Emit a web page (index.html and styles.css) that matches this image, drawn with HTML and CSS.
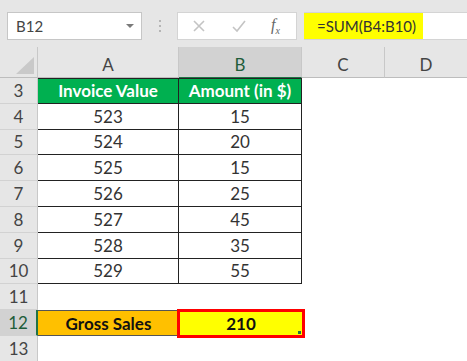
FILE: index.html
```html
<!DOCTYPE html>
<html lang="en">
<head>
  <meta charset="UTF-8">
  <title>Gross Sales - Book1</title>
  <link rel="stylesheet" href="styles.css">
</head>
<body>
  <div class="toolbar">
    <div class="namebox">
      <span>B12</span>
      <svg class="caret" width="8" height="4" viewBox="0 0 8 4"><path d="M0 0H8L4 4Z" fill="#7a7a7a"/></svg>
    </div>
    <div class="grip"><i></i><i></i><i></i></div>
    <div class="fxbox">
      <svg width="14" height="14" viewBox="0 0 14 14"><path d="M2 2L12 12M12 2L2 12" stroke="#c4c4c4" stroke-width="1.6" fill="none"/></svg>
      <svg width="16" height="14" viewBox="0 0 16 14"><path d="M2 8L6 12L14 2" stroke="#c4c4c4" stroke-width="1.6" fill="none"/></svg>
      <span class="fx"><i>f</i><sub>x</sub></span>
    </div>
    <div class="formula">
      <span class="mark">=SUM(B4:B10)</span>
    </div>
  </div>

  <div class="sheet">
    <div class="corner"><svg width="18" height="17" viewBox="0 0 18 17"><path d="M18 0V17H0Z" fill="#c9c9c9"/></svg></div>
    <div class="colhead">A</div>
    <div class="colhead active">B</div>
    <div class="colhead">C</div>
    <div class="colhead last">D</div>

    <div class="rowhead">3</div>
    <div class="cell tbl top title">Invoice Value</div>
    <div class="cell tbl top title">Amount (in $)</div>
    <div class="cell"></div><div class="cell"></div>

    <div class="rowhead">4</div>
    <div class="cell tbl">523</div><div class="cell tbl">15</div>
    <div class="cell"></div><div class="cell"></div>

    <div class="rowhead">5</div>
    <div class="cell tbl">524</div><div class="cell tbl">20</div>
    <div class="cell"></div><div class="cell"></div>

    <div class="rowhead">6</div>
    <div class="cell tbl">525</div><div class="cell tbl">15</div>
    <div class="cell"></div><div class="cell"></div>

    <div class="rowhead">7</div>
    <div class="cell tbl">526</div><div class="cell tbl">25</div>
    <div class="cell"></div><div class="cell"></div>

    <div class="rowhead">8</div>
    <div class="cell tbl">527</div><div class="cell tbl">45</div>
    <div class="cell"></div><div class="cell"></div>

    <div class="rowhead">9</div>
    <div class="cell tbl">528</div><div class="cell tbl">35</div>
    <div class="cell"></div><div class="cell"></div>

    <div class="rowhead">10</div>
    <div class="cell tbl">529</div><div class="cell tbl">55</div>
    <div class="cell"></div><div class="cell"></div>

    <div class="rowhead">11</div>
    <div class="cell"></div><div class="cell"></div>
    <div class="cell"></div><div class="cell"></div>

    <div class="rowhead active">12</div>
    <div class="cell label">Gross Sales</div>
    <div class="cell total">210<span class="handle"></span></div>
    <div class="cell"></div><div class="cell"></div>

    <div class="rowhead">13</div>
    <div class="cell"></div><div class="cell"></div>
    <div class="cell"></div><div class="cell"></div>
  </div>
</body>
</html>
```

FILE: styles.css
```css
body {
  margin: 0;
  font-family: Lato, "Open Sans", Arial, sans-serif;
  background: #fff;
  color: #333;
  width: 467px;
  height: 361px;
  overflow: hidden;
}

/* formula bar */
.toolbar {
  display: flex;
  align-items: center;
  height: 47px;
  background: #e6e6e6;
  padding-left: 7px;
  box-sizing: border-box;
}
.namebox {
  width: 135px;
  height: 28px;
  background: #fff;
  border: 1px solid #c6c6c6;
  box-sizing: border-box;
  display: flex;
  align-items: center;
  justify-content: space-between;
  padding: 0 7px 0 8px;
  font-size: 15px;
  color: #444;
  margin-top: 5px;
}
.grip {
  width: 35px;
  display: flex;
  flex-direction: column;
  align-items: center;
  gap: 3px;
  margin-top: 5px;
}
.grip i {
  width: 2px;
  height: 2px;
  background: #b5b5b5;
}
.fxbox {
  width: 120px;
  height: 28px;
  background: #fff;
  border: 1px solid #d4d4d4;
  box-sizing: border-box;
  display: flex;
  align-items: center;
  justify-content: space-between;
  padding: 0 16px 0 14px;
  margin-top: 5px;
}
.fx {
  font-family: "Liberation Serif", serif;
  font-size: 16px;
  color: #666;
}
.fx sub {
  font-size: 10px;
  font-style: italic;
}
.formula {
  flex: 1;
  height: 28px;
  margin-left: 7px;
  margin-top: 5px;
  background: #fff;
  border-top: 1px solid #d4d4d4;
  border-bottom: 1px solid #d4d4d4;
  box-sizing: border-box;
  display: flex;
}
.mark {
  background: #ffff00;
  width: 119px;
  box-sizing: border-box;
  padding-left: 13px;
  display: flex;
  align-items: center;
  font-size: 15px;
  color: #333;
  white-space: nowrap;
}

/* grid */
.sheet {
  display: grid;
  grid-template-columns: 38px 141px 123px 83px 82px;
  grid-template-rows: 31px;
  grid-auto-rows: 25.8px;
}
.corner {
  background: #e6e6e6;
  border-right: 1px solid #c8c8c8;
  border-bottom: 1px solid #bdbdbd;
  box-sizing: border-box;
  display: flex;
  align-items: flex-end;
  justify-content: flex-end;
  padding: 0 3px 3px 0;
}
.colhead {
  background: #e6e6e6;
  border-right: 1px solid #c8c8c8;
  border-bottom: 1px solid #bdbdbd;
  box-sizing: border-box;
  display: flex;
  align-items: center;
  justify-content: center;
  font-size: 17px;
  color: #444;
  padding-top: 4px;
}
.colhead.active {
  background: #d2d2d2;
  color: #1e5d3a;
  border-bottom: 1px solid #217346;
}
.colhead.last {
  border-right: none;
}
.rowhead {
  background: #e6e6e6;
  border-right: 1px solid #c8c8c8;
  border-bottom: 1px solid #d2d2d2;
  box-sizing: border-box;
  display: flex;
  align-items: center;
  justify-content: center;
  font-size: 17px;
  color: #444;
}
.rowhead.active {
  background: #d2d2d2;
  color: #1e5d3a;
  border-right: 2px solid #217346;
}
.cell {
  box-sizing: border-box;
  display: flex;
  align-items: center;
  justify-content: center;
  font-size: 17px;
  color: #333;
  white-space: nowrap;
  position: relative;
}
.tbl {
  border-right: 1px solid #222;
  border-bottom: 1px solid #222;
}
.tbl.top {
  border-top: 1px solid #222;
}
.title {
  background: #00b050;
  color: #fff;
  font-weight: bold;
}
.label {
  background: #ffc000;
  color: #111;
  font-weight: bold;
  border-top: 1px solid #555;
  border-bottom: 1px solid #555;
}
.total {
  background: #ffff00;
  color: #111;
  font-weight: bold;
  border: 3px solid #ff0000;
  margin: -1px -3px -2px -2px;
}
.handle {
  position: absolute;
  right: 1px;
  bottom: 1px;
  width: 3px;
  height: 3px;
  background: #217346;
}
```
